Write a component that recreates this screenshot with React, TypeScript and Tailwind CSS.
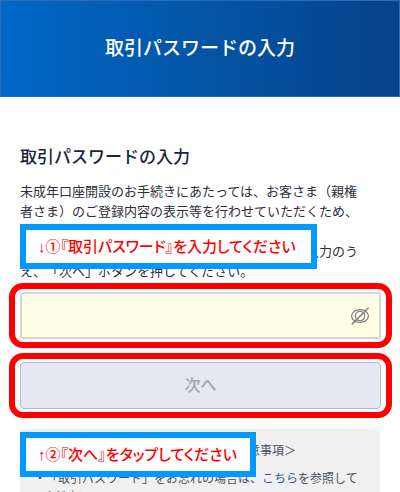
import type { ReactNode } from "react";

const FONT = "font-['Liberation_Sans','Noto_Sans_CJK_JP',sans-serif]";

const INSTRUCTIONS = [
  "未成年口座開設のお手続きにあたっては、お客さま（親権",
  "者さま）のご登録内容の表示等を行わせていただくため、",
  "ご本人さまであることの確認が必要です。",
  "お客さまがお使いの「取引パスワード」をご確認入力のう",
  "え、「次へ」ボタンを押してください。",
];

function EyeOffIcon() {
  return (
    <svg viewBox="0 0 20 20" className="size-5" fill="none" stroke="#80828a" aria-hidden="true">
      <ellipse cx="10" cy="10" rx="8.4" ry="6.4" strokeWidth="1.3" />
      <circle cx="10" cy="10" r="4.6" strokeWidth="1.3" />
      <path d="M1.8 18.4 18.6 1.8" strokeWidth="1.5" />
    </svg>
  );
}

function Highlight({ children }: { children: ReactNode }) {
  return (
    <div className="rounded-[14px] border-6 border-[#ff0000] px-[5px] py-[3px]">{children}</div>
  );
}

function Callout({ className, children }: { className: string; children: ReactNode }) {
  return (
    <p
      className={`absolute left-0 h-[45px] whitespace-nowrap border-6 border-[#0099ff] bg-white px-3 text-[15px] leading-[33px] font-medium text-[#ff0000] [font-feature-settings:'palt'] ${className}`}
    >
      {children}
    </p>
  );
}

export default function App() {
  return (
    <div
      className={`h-screen overflow-hidden bg-[#fefefe] text-[#2b303b] [text-spacing-trim:space-all] ${FONT}`}
    >
      <header className="flex h-[97px] items-center justify-center border border-[#2a6cb8] bg-linear-to-r from-[#0068c8] via-[#0455a6] to-[#07428a]">
        <h1 className="pt-px text-[19px] font-medium text-white">取引パスワードの入力</h1>
      </header>

      <main className="pt-12">
        <section className="relative mx-5">
          <h2 className="pt-px text-[17px] leading-6 font-medium text-[#1b2538]">
            取引パスワードの入力
          </h2>
          <p className="mt-3 text-[13px] leading-5">
            {INSTRUCTIONS.map((line) => (
              <span key={line} className="block whitespace-nowrap">
                {line}
              </span>
            ))}
          </p>
          <Callout className="top-[79px] w-[297px]">↓①『取引パスワード』を入力してください</Callout>
        </section>

        <form
          className="mr-2 ml-[9px] flex flex-col gap-[5px] pt-px"
          onSubmit={(e) => e.preventDefault()}
        >
          <Highlight>
            <div className="relative">
              <input
                type="password"
                aria-label="取引パスワード"
                className="block h-[47px] w-full rounded-[2px] border-2 border-[#d3d5d6] bg-[#fffde3] pr-10 pl-3 outline-none"
              />
              <button
                type="button"
                aria-label="パスワードを表示"
                className="absolute inset-y-0 right-[11px] flex items-center"
              >
                <EyeOffIcon />
              </button>
            </div>
          </Highlight>
          <Highlight>
            <button
              type="submit"
              className="block h-[47px] w-full rounded-[4px] border border-[#b4bccd] bg-[#e6e7f1] text-base font-medium text-[#a0a6b2]"
            >
              次へ
            </button>
          </Highlight>
        </form>

        <section className="relative mx-5 mt-[11px] bg-[#f0f0f0] pt-3 pb-5 text-xs text-[#4a5160]">
          <h3 className="text-center leading-5">＜取引パスワード等のご注意事項＞</h3>
          <p className="mt-[9px] pl-[14px] leading-[18px] whitespace-nowrap">
            ・「取引パスワード」をお忘れの場合は、
            <a href="#" className="text-[#3359a8]">
              こちら
            </a>
            を参照して
            <span className="block pl-2">ください。</span>
          </p>
          <Callout className="top-[3px] w-[236px]">↑②『次へ』をタップしてください</Callout>
        </section>
      </main>
    </div>
  );
}
